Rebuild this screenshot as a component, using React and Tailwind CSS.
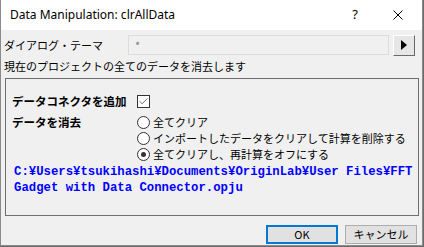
import { Check } from 'lucide-react';

const jp = { fontFamily: '"MS UI Gothic", "Noto Sans CJK JP", sans-serif' };

function Radio({ checked, label }) {
  return (
    <div className="flex h-[16px] items-center">
      <span className="flex h-[13px] w-[13px] items-center justify-center rounded-full border border-[#333] bg-white">
        {checked && <span className="h-[5px] w-[5px] rounded-full bg-[#333]" />}
      </span>
      <span className="ml-[3px] text-[11px] leading-[16px] text-black">{label}</span>
    </div>
  );
}

export default function App() {
  return (
    <div className="h-[247px] w-[424px] bg-[#6b6b6b]" style={jp}>
      <div className="flex h-[246px] w-[423px] flex-col border-x border-b border-[#8a8a8a] bg-[#f0f0f0]">
        {/* title bar */}
        <div className="flex h-[30px] shrink-0 items-center bg-white">
          <span className="ml-[9px] text-[12px] text-black" style={{ fontFamily: '"Segoe UI", "Noto Sans", sans-serif' }}>
            Data Manipulation: clrAllData
          </span>
          <span className="ml-auto text-[13px] text-black" style={{ fontFamily: '"Noto Sans", sans-serif' }}>?</span>
          <svg className="ml-[35px] mr-[19px]" width="10" height="10" viewBox="0 0 10 10">
            <path d="M0.5 0.5 L9.5 9.5 M9.5 0.5 L0.5 9.5" stroke="#000" strokeWidth="1" fill="none" />
          </svg>
        </div>

        {/* theme row */}
        <div className="mt-[5px] flex h-[20px] items-center pl-[3px]">
          <span className="w-[124px] text-[11px] leading-[16px] text-black">ダイアログ・テーマ</span>
          <div className="flex h-[20px] w-[261px] items-center border border-[#dcdcdc] bg-[#f0f0f0] pl-[6px] text-[11px] text-[#7a7a7a]">
            *
          </div>
          <button className="ml-[4px] flex h-[21px] w-[22px] items-center justify-center border border-t-white border-l-white border-r-[#696969] border-b-[#696969] bg-[#e6e6e6]">
            <svg width="8" height="10" viewBox="0 0 8 10">
              <path d="M1 0 L7 5 L1 10 Z" fill="#000" />
            </svg>
          </button>
        </div>

        <div className="mt-[3px] h-[16px] pl-[3px] text-[11px] leading-[16px] text-black">
          現在のプロジェクトの全てのデータを消去します
        </div>

        {/* group box */}
        <div className="ml-[4px] mt-[4px] h-[138px] w-[414px] border border-[#6e6e6e] pl-[6px] pt-[15px]">
          <div className="flex h-[14px] items-center">
            <span className="w-[125px] text-[11.5px] font-bold leading-[14px] text-black">データコネクタを追加</span>
            <span className="flex h-[13px] w-[13px] items-center justify-center border border-[#333] bg-white">
              <Check size={11} strokeWidth={1.5} color="#333" />
            </span>
          </div>
          <div className="mt-[6px] flex">
            <span className="w-[125px] text-[11.5px] font-bold leading-[16px] text-black">データを消去</span>
            <div className="flex flex-col">
              <Radio label="全てクリア" />
              <Radio label="インポートしたデータをクリアして計算を削除する" />
              <Radio checked label="全てクリアし、再計算をオフにする" />
            </div>
          </div>
          <div
            className="mt-[2px] pl-[2px] text-[12.3px] font-bold leading-[16px] text-[#0000ff]"
            style={{ fontFamily: '"Liberation Mono", monospace' }}
          >
            <div>C:¥Users¥tsukihashi¥Documents¥OriginLab¥User Files¥FFT</div>
            <div>Gadget with Data Connector.opju</div>
          </div>
        </div>

        {/* buttons */}
        <div className="mt-[9px] flex justify-end gap-[7px] pr-[5px]">
          <button className="flex h-[19px] w-[72px] items-center justify-center border-2 border-[#0078d7] bg-[#e1e1e1] text-[11px] text-black">
            OK
          </button>
          <button className="flex h-[19px] w-[72px] items-center justify-center border border-[#adadad] bg-[#e1e1e1] text-[11px] text-black">
            キャンセル
          </button>
        </div>
      </div>
    </div>
  );
}
